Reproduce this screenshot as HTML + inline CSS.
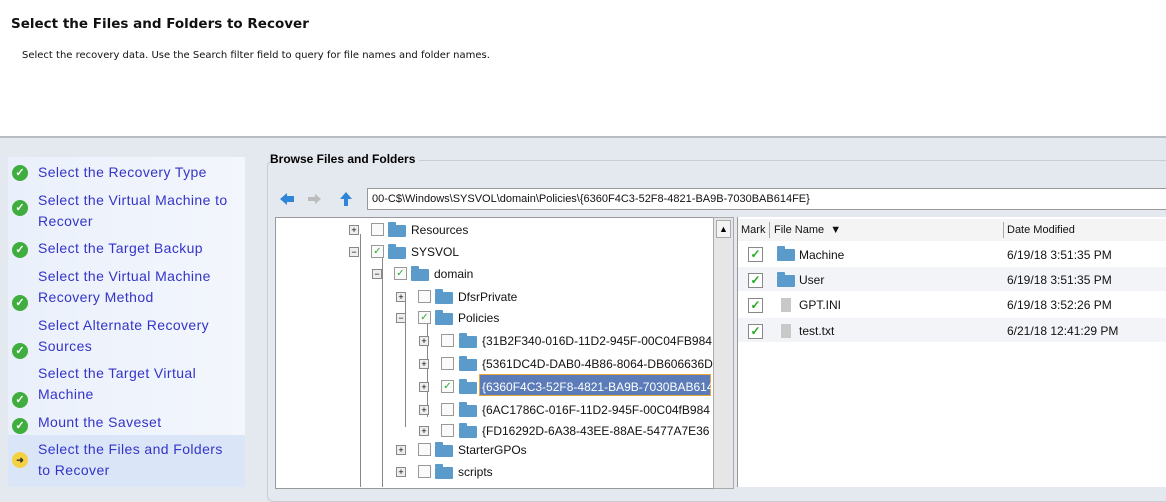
<!DOCTYPE html><html><head><style>
body{margin:0;width:1166px;height:487px;overflow:hidden;background:#e4e8ef;font-family:"Liberation Sans",sans-serif;position:relative}
.a{position:absolute}
.hdr{left:0;top:0;width:1166px;height:136px;background:#fff;border-bottom:2px solid #b8bcc4}
.nav{left:8px;top:157px;width:237px;height:330px;background:linear-gradient(90deg,#eaf0fb,#f3f6fc)}
.ni{position:absolute;left:30px;color:#3434c8;font-size:14px;line-height:21px;letter-spacing:0.4px}
.ck{position:absolute;left:4px;width:16px;height:16px;border-radius:50%;background:#3fae3f;color:#fff;font-size:11px;line-height:16px;text-align:center;font-weight:bold}
.t{font-size:12px;color:#111;white-space:nowrap}
.ex{position:absolute;width:8px;height:8px;border:1px solid #888;background:#eee;font-size:9px;line-height:8px;text-align:center;color:#000}
.cb{position:absolute;width:11px;height:11px;border:1px solid #999;background:#fafafa;font-size:10px;line-height:11px;text-align:center;color:#3a3}
.fd{position:absolute;width:18px;height:12px;background:#5b9bcc;border-radius:1px}
.fd:before{content:"";position:absolute;left:0;top:-3px;width:8px;height:3px;background:#5b9bcc;border-radius:1px 1px 0 0}
.fl{position:absolute;width:10px;height:14px;background:#c8c8c8}
.lc{position:absolute;width:13px;height:13px;border:1px solid #888;background:#fff;color:#2a2;font-size:12px;line-height:13px;text-align:center;font-weight:bold}
</style></head><body>
<div class="a hdr"></div>
<div class="a" style="left:11px;top:16px;font-family:'DejaVu Sans',sans-serif;font-size:13.5px;font-weight:bold;color:#111;white-space:nowrap">Select the Files and Folders to Recover</div>
<div class="a t" style="left:22px;top:50px;font-family:'DejaVu Sans',sans-serif;font-size:10px">Select the recovery data. Use the Search filter field to query for file names and folder names.</div>
<div class="a nav">
<div class="ck" style="top:8px">✓</div><div class="ni" style="top:5px">Select the Recovery Type</div>
<div class="ck" style="top:43px">✓</div><div class="ni" style="top:33px">Select the Virtual Machine to<br>Recover</div>
<div class="ck" style="top:85px">✓</div><div class="ni" style="top:81px">Select the Target Backup</div>
<div class="ck" style="top:138px">✓</div><div class="ni" style="top:109px">Select the Virtual Machine<br>Recovery Method</div>
<div class="ck" style="top:186px">✓</div><div class="ni" style="top:158px">Select Alternate Recovery<br>Sources</div>
<div class="ck" style="top:235px">✓</div><div class="ni" style="top:206px">Select the Target Virtual<br>Machine</div>
<div class="ck" style="top:261px">✓</div><div class="ni" style="top:255px">Mount the Saveset</div>
<div style="position:absolute;left:0;top:278px;width:237px;height:52px;background:#dae6f7"></div>
<div class="ck" style="top:295px;background:#f5d040;color:#333;font-size:9px">➜</div><div class="ni" style="top:282px">Select the Files and Folders<br>to Recover</div>
</div>
<div class="a" style="left:267px;top:160px;width:910px;height:340px;border:1px solid #c8ccd4;border-radius:6px"></div>
<div class="a" style="left:270px;top:152px;font-size:12px;font-weight:bold;background:#e4e8ef;padding-right:4px">Browse Files and Folders</div>
<svg class="a" style="left:278px;top:191px" width="80" height="16"><path d="M2 8 L9 2 V5 H16 V11 H9 V14Z" fill="#2f86d6"/><path d="M43 8 L37 3 V6 H30 V10 H37 V13Z" fill="#bbb"/><path d="M68 1 L74 8 H70 V15 H66 V8 H62Z" fill="#2f86d6"/></svg>
<div class="a t" style="left:367px;top:188px;width:800px;height:20px;background:#fff;border:1px solid #999;font-size:11px;line-height:20px;padding-left:4px">00-C$\Windows\SYSVOL\domain\Policies\{6360F4C3-52F8-4821-BA9B-7030BAB614FE}</div>
<div class="a" style="left:275px;top:217px;width:437px;height:270px;background:#fff;border:1px solid #999"></div>
<div class="a" style="left:713px;top:217px;width:19px;height:270px;background:#e6e6e6;border:1px solid #aaa"></div>
<div class="a" style="left:716px;top:220px;width:13px;height:16px;background:#f4f4f4;border:1px solid #aaa;font-size:9px;text-align:center;line-height:16px">▲</div>
<div class="a" style="left:737px;top:217px;width:430px;height:270px;background:#fff;border-left:1px solid #999"></div>
<div class="a" style="left:738px;top:219px;width:428px;height:22px;background:#f4f4f4"></div>
<div class="a t" style="left:741px;top:224px;font-size:11px">Mark</div>
<div class="a" style="left:769px;top:222px;width:1px;height:16px;background:#aaa"></div>
<div class="a t" style="left:774px;top:224px;font-size:11px">File Name &nbsp;▼</div>
<div class="a" style="left:1003px;top:222px;width:1px;height:16px;background:#aaa"></div>
<div class="a t" style="left:1007px;top:224px;font-size:11px">Date Modified</div>
<div class="a" style="left:738px;top:267px;width:428px;height:24px;background:#f2f4f8"></div>
<div class="a" style="left:738px;top:318px;width:428px;height:24px;background:#f2f4f8"></div>
<div class="lc a" style="left:748px;top:247px">✓</div><div class="fd" style="left:777px;top:249px"></div><div class="a t" style="left:799px;top:248px">Machine</div><div class="a t" style="left:1007px;top:248px">6/19/18 3:51:35 PM</div>
<div class="lc a" style="left:748px;top:273px">✓</div><div class="fd" style="left:777px;top:275px"></div><div class="a t" style="left:799px;top:273px">User</div><div class="a t" style="left:1007px;top:273px">6/19/18 3:51:35 PM</div>
<div class="lc a" style="left:748px;top:298px">✓</div><div class="fl" style="left:781px;top:298px"></div><div class="a t" style="left:799px;top:298px">GPT.INI</div><div class="a t" style="left:1007px;top:298px">6/19/18 3:52:26 PM</div>
<div class="lc a" style="left:748px;top:324px">✓</div><div class="fl" style="left:781px;top:324px"></div><div class="a t" style="left:799px;top:324px">test.txt</div><div class="a t" style="left:1007px;top:324px">6/21/18 12:41:29 PM</div>
<div class="a" style="left:360px;top:234px;width:1px;height:253px;background:#888"></div>
<div class="a" style="left:382px;top:258px;width:1px;height:229px;background:#888"></div>
<div class="a" style="left:405px;top:302px;width:1px;height:125px;background:#888"></div>
<div class="a" style="left:427px;top:323px;width:1px;height:94px;background:#888"></div>
<div class="ex" style="left:349px;top:225px">+</div><div class="cb" style="left:371px;top:223px"></div><div class="fd" style="left:388px;top:225px"></div><div class="a t" style="left:411px;top:223px">Resources</div>
<div class="ex" style="left:349px;top:247px">−</div><div class="cb" style="left:371px;top:245px">✓</div><div class="fd" style="left:388px;top:247px"></div><div class="a t" style="left:411px;top:245px">SYSVOL</div>
<div class="ex" style="left:372px;top:269px">−</div><div class="cb" style="left:394px;top:267px">✓</div><div class="fd" style="left:411px;top:269px"></div><div class="a t" style="left:434px;top:267px">domain</div>
<div class="ex" style="left:396px;top:292px">+</div><div class="cb" style="left:418px;top:290px"></div><div class="fd" style="left:435px;top:292px"></div><div class="a t" style="left:458px;top:290px">DfsrPrivate</div>
<div class="ex" style="left:396px;top:313px">−</div><div class="cb" style="left:418px;top:311px">✓</div><div class="fd" style="left:435px;top:313px"></div><div class="a t" style="left:458px;top:311px">Policies</div>
<div class="ex" style="left:419px;top:336px">+</div><div class="cb" style="left:441px;top:334px"></div><div class="fd" style="left:459px;top:336px"></div><div class="a t" style="left:482px;top:334px">{31B2F340-016D-11D2-945F-00C04FB984</div>
<div class="ex" style="left:419px;top:359px">+</div><div class="cb" style="left:441px;top:357px"></div><div class="fd" style="left:459px;top:359px"></div><div class="a t" style="left:482px;top:357px">{5361DC4D-DAB0-4B86-8064-DB606636D</div>
<div class="a" style="left:479px;top:374px;width:232px;height:22px;background:#5b7cb8;border:1px solid #e8a838;box-sizing:border-box"></div>
<div class="ex" style="left:419px;top:382px">+</div><div class="cb" style="left:441px;top:380px;color:#2a2">✓</div><div class="fd" style="left:459px;top:382px"></div><div class="a t" style="left:482px;top:380px;color:#fff;width:229px;overflow:hidden">{6360F4C3-52F8-4821-BA9B-7030BAB614FE}</div>
<div class="ex" style="left:419px;top:405px">+</div><div class="cb" style="left:441px;top:403px"></div><div class="fd" style="left:459px;top:405px"></div><div class="a t" style="left:482px;top:403px">{6AC1786C-016F-11D2-945F-00C04fB984</div>
<div class="ex" style="left:419px;top:426px">+</div><div class="cb" style="left:441px;top:424px"></div><div class="fd" style="left:459px;top:426px"></div><div class="a t" style="left:482px;top:424px;width:229px;overflow:hidden">{FD16292D-6A38-43EE-88AE-5477A7E36</div>
<div class="ex" style="left:396px;top:445px">+</div><div class="cb" style="left:418px;top:443px"></div><div class="fd" style="left:435px;top:445px"></div><div class="a t" style="left:458px;top:443px">StarterGPOs</div>
<div class="ex" style="left:396px;top:467px">+</div><div class="cb" style="left:418px;top:465px"></div><div class="fd" style="left:435px;top:467px"></div><div class="a t" style="left:458px;top:465px">scripts</div>
</body></html>
